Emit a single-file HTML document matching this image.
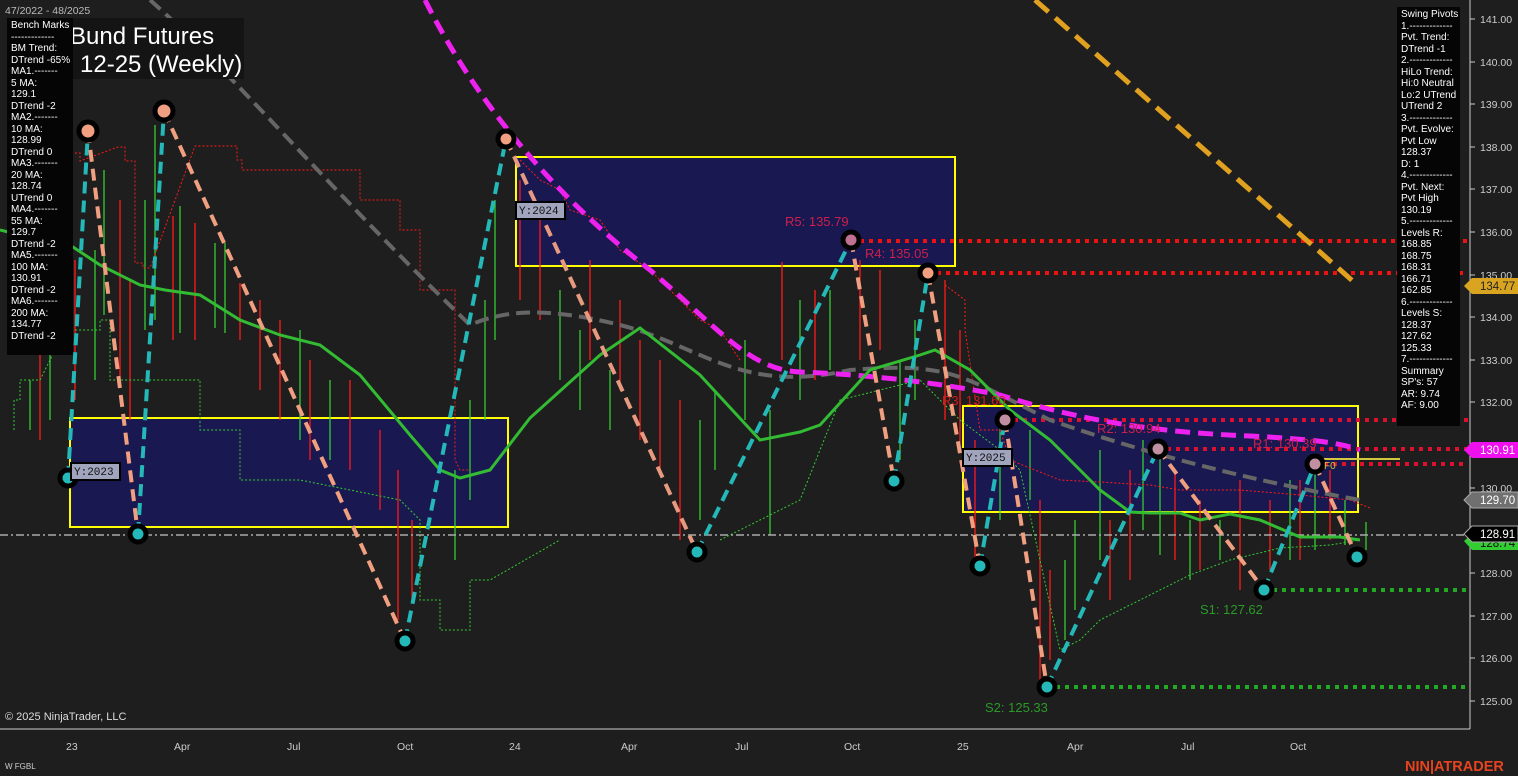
<!DOCTYPE html>
<html><head><meta charset="utf-8"><style>
html,body{margin:0;padding:0;background:#1e1e1e;width:1518px;height:776px;overflow:hidden;font-family:"Liberation Sans",sans-serif}
svg{position:absolute;left:0;top:0}
.panel{position:absolute;background:#050505;color:#fff;font-size:10px;line-height:11.5px;padding:2px 0 0 4px;box-sizing:border-box}
</style></head><body>
<svg width="1518" height="776" viewBox="0 0 1518 776" xmlns="http://www.w3.org/2000/svg">
<rect width="1518" height="776" fill="#1e1e1e"/>
<rect x="70" y="418" width="438" height="109" fill="#1a1850" stroke="#ffff00" stroke-width="2"/>
<rect x="516" y="157" width="439" height="109" fill="#1a1850" stroke="#ffff00" stroke-width="2"/>
<rect x="963" y="406" width="395" height="106" fill="#1a1850" stroke="#ffff00" stroke-width="2"/>
<g stroke-width="1.3">
<g stroke="#33cc33">
<line x1="30" y1="380" x2="30" y2="430"/><line x1="50" y1="330" x2="50" y2="420"/><line x1="95" y1="250" x2="95" y2="380"/><line x1="104" y1="170" x2="104" y2="315"/><line x1="145" y1="200" x2="145" y2="330"/><line x1="155" y1="125" x2="155" y2="320"/><line x1="180" y1="206" x2="180" y2="333"/><line x1="215" y1="243" x2="215" y2="328"/><line x1="225" y1="243" x2="225" y2="333"/><line x1="300" y1="330" x2="300" y2="440"/><line x1="330" y1="380" x2="330" y2="460"/><line x1="455" y1="470" x2="455" y2="560"/><line x1="470" y1="400" x2="470" y2="500"/><line x1="485" y1="300" x2="485" y2="420"/><line x1="495" y1="200" x2="495" y2="340"/><line x1="560" y1="290" x2="560" y2="380"/><line x1="580" y1="330" x2="580" y2="410"/><line x1="610" y1="370" x2="610" y2="430"/><line x1="700" y1="420" x2="700" y2="520"/><line x1="715" y1="390" x2="715" y2="470"/><line x1="745" y1="340" x2="745" y2="420"/><line x1="770" y1="410" x2="770" y2="535"/><line x1="800" y1="300" x2="800" y2="400"/><line x1="830" y1="290" x2="830" y2="370"/><line x1="900" y1="360" x2="900" y2="460"/><line x1="915" y1="320" x2="915" y2="400"/><line x1="1000" y1="420" x2="1000" y2="520"/><line x1="1030" y1="430" x2="1030" y2="500"/><line x1="1065" y1="560" x2="1065" y2="640"/><line x1="1075" y1="520" x2="1075" y2="610"/><line x1="1100" y1="450" x2="1100" y2="560"/><line x1="1143" y1="440" x2="1143" y2="530"/><line x1="1160" y1="450" x2="1160" y2="555"/><line x1="1190" y1="520" x2="1190" y2="580"/><line x1="1220" y1="520" x2="1220" y2="560"/><line x1="1290" y1="480" x2="1290" y2="560"/><line x1="1315" y1="470" x2="1315" y2="550"/><line x1="1345" y1="500" x2="1345" y2="545"/><line x1="1366" y1="522" x2="1366" y2="550"/>
</g>
<g stroke="#ff1a1a">
<line x1="40" y1="350" x2="40" y2="440"/><line x1="75" y1="260" x2="75" y2="400"/><line x1="120" y1="200" x2="120" y2="380"/><line x1="130" y1="280" x2="130" y2="420"/><line x1="173" y1="216" x2="173" y2="340"/><line x1="195" y1="223" x2="195" y2="340"/><line x1="240" y1="283" x2="240" y2="340"/><line x1="260" y1="300" x2="260" y2="390"/><line x1="280" y1="320" x2="280" y2="420"/><line x1="310" y1="360" x2="310" y2="460"/><line x1="350" y1="380" x2="350" y2="470"/><line x1="380" y1="430" x2="380" y2="510"/><line x1="398" y1="470" x2="398" y2="620"/><line x1="412" y1="520" x2="412" y2="600"/><line x1="520" y1="180" x2="520" y2="300"/><line x1="540" y1="220" x2="540" y2="320"/><line x1="590" y1="260" x2="590" y2="360"/><line x1="620" y1="300" x2="620" y2="390"/><line x1="640" y1="340" x2="640" y2="440"/><line x1="660" y1="360" x2="660" y2="470"/><line x1="680" y1="400" x2="680" y2="540"/><line x1="782" y1="262" x2="782" y2="360"/><line x1="815" y1="290" x2="815" y2="380"/><line x1="860" y1="260" x2="860" y2="360"/><line x1="880" y1="270" x2="880" y2="350"/><line x1="945" y1="280" x2="945" y2="420"/><line x1="960" y1="330" x2="960" y2="450"/><line x1="975" y1="440" x2="975" y2="560"/><line x1="1040" y1="500" x2="1040" y2="680"/><line x1="1050" y1="570" x2="1050" y2="660"/><line x1="1110" y1="520" x2="1110" y2="600"/><line x1="1130" y1="470" x2="1130" y2="580"/><line x1="1175" y1="470" x2="1175" y2="560"/><line x1="1200" y1="500" x2="1200" y2="570"/><line x1="1240" y1="480" x2="1240" y2="590"/><line x1="1270" y1="500" x2="1270" y2="570"/><line x1="1300" y1="480" x2="1300" y2="560"/><line x1="1330" y1="470" x2="1330" y2="540"/>
</g>
</g>
<polyline fill="none" stroke="#ff1a1a" stroke-width="1" stroke-dasharray="2,2" points="75,153 80,153 80,161 118,147 125,147 125,161 135,161 135,263 143,263 143,268 150,268 195,146 237,146 237,160 242,160 242,170 360,170 360,200 400,200 400,230 420,230 420,290 455,290 455,460 460,470 470,470"/>
<polyline fill="none" stroke="#ff1a1a" stroke-width="1" stroke-dasharray="2,2" points="520,160 540,180 560,190 570,210 600,220 620,250 650,270 680,300 700,320 720,330 740,360"/>
<polyline fill="none" stroke="#ff1a1a" stroke-width="1" stroke-dasharray="2,2" points="945,285 965,300 965,330 980,430 1000,430 1010,460 1060,480 1100,482 1150,485 1180,490 1240,490 1300,495 1350,500 1370,508"/>
<polyline fill="none" stroke="#33cc33" stroke-width="1" stroke-dasharray="2,2" points="14,430 14,400 20,400 20,380 40,380 50,360 60,340 70,330 100,330 100,320 110,320 110,380 200,380 200,430 240,430 240,480 300,480 400,500 420,520 420,600 440,600 440,630 470,630 470,580 490,580 560,540"/>
<polyline fill="none" stroke="#33cc33" stroke-width="1" stroke-dasharray="2,2" points="720,540 760,520 800,500 840,400 880,390 920,380 960,420 1000,450 1020,470 1040,560 1060,650 1080,640 1100,620 1140,600 1190,575 1230,560 1280,548 1330,545 1360,540"/>
<line x1="0" y1="535" x2="1470" y2="535" stroke="#aaa" stroke-width="1.5" stroke-dasharray="8,3,2,3"/>
<g stroke-width="4" stroke-dasharray="4,5" fill="none">
<line x1="851" y1="241" x2="1468" y2="241" stroke="#ee1111"/>
<line x1="928" y1="273" x2="1468" y2="273" stroke="#ee1111"/>
<line x1="1005" y1="420" x2="1468" y2="420" stroke="#dd1030"/>
<line x1="1158" y1="449" x2="1468" y2="449" stroke="#dd1030"/>
<line x1="1315" y1="464" x2="1468" y2="464" stroke="#dd1030"/>
<line x1="1264" y1="590" x2="1468" y2="590" stroke="#22aa22"/>
<line x1="1047" y1="687" x2="1468" y2="687" stroke="#22aa22"/>
</g>
<line x1="1320" y1="459" x2="1400" y2="459" stroke="#d4c840" stroke-width="2"/>
<path d="M1035,0 L1355,283" stroke="#e0a020" stroke-width="5" stroke-dasharray="18,9" fill="none"/>
<path d="M150,0 C230,70 330,190 470,325 C500,312 540,305 620,325 C700,345 740,395 850,370 C950,362 960,375 1050,420 C1150,455 1250,480 1360,500" stroke="#666" stroke-width="4" stroke-dasharray="14,7" fill="none"/>
<path d="M425,0 C480,110 560,200 650,270 C720,330 750,370 800,372 C880,375 950,385 1000,395 C1080,420 1150,432 1250,436 C1330,440 1345,445 1360,450" stroke="#ee22ee" stroke-width="5" stroke-dasharray="15,8" fill="none"/>
<polyline fill="none" stroke="#33bb33" stroke-width="3" points="0,230 40,240 70,245 100,265 140,285 165,290 200,295 240,320 280,335 320,345 360,375 410,435 440,470 460,478 490,470 530,418 600,355 640,328 700,375 760,440 800,432 820,425 870,370 920,355 935,350 970,370 1010,410 1050,440 1100,490 1130,512 1150,513 1180,513 1200,520 1230,514 1260,520 1300,537 1340,537 1360,540"/>
<g stroke-width="4" stroke-dasharray="12,7" fill="none">
<line x1="68" y1="478" x2="88" y2="131" stroke="#25b8b8"/>
<line x1="88" y1="131" x2="138" y2="534" stroke="#f0a080"/>
<line x1="138" y1="534" x2="164" y2="111" stroke="#25b8b8"/>
<line x1="164" y1="111" x2="405" y2="641" stroke="#f0a080"/>
<line x1="405" y1="641" x2="506" y2="139" stroke="#25b8b8"/>
<line x1="506" y1="139" x2="697" y2="552" stroke="#e89a80"/>
<line x1="697" y1="552" x2="851" y2="240" stroke="#25b8b8"/>
<line x1="851" y1="240" x2="894" y2="481" stroke="#f0a080"/>
<line x1="894" y1="481" x2="928" y2="273" stroke="#25b8b8"/>
<line x1="928" y1="273" x2="980" y2="566" stroke="#f0a080"/>
<line x1="980" y1="566" x2="1005" y2="420" stroke="#25b8b8"/>
<line x1="1005" y1="420" x2="1047" y2="687" stroke="#f0a080"/>
<line x1="1047" y1="687" x2="1158" y2="449" stroke="#25b8b8"/>
<line x1="1158" y1="449" x2="1264" y2="590" stroke="#f0a080"/>
<line x1="1264" y1="590" x2="1315" y2="464" stroke="#25b8b8"/>
<line x1="1315" y1="464" x2="1357" y2="557" stroke="#f0a080"/>
</g>
<g stroke="#000" stroke-width="5">
<circle cx="68" cy="478" r="8" fill="#25b8b8"/><circle cx="88" cy="131" r="9" fill="#f0a080"/><circle cx="138" cy="534" r="8" fill="#25b8b8"/><circle cx="164" cy="111" r="9" fill="#f0a080"/><circle cx="405" cy="641" r="8" fill="#25b8b8"/><circle cx="506" cy="139" r="8" fill="#f0a080"/><circle cx="697" cy="552" r="8" fill="#25b8b8"/><circle cx="851" cy="240" r="8" fill="#c07090"/><circle cx="894" cy="481" r="8" fill="#25b8b8"/><circle cx="928" cy="273" r="8" fill="#f0a080"/><circle cx="980" cy="566" r="8" fill="#25b8b8"/><circle cx="1005" cy="420" r="8" fill="#c090a0"/><circle cx="1047" cy="687" r="8" fill="#25b8b8"/><circle cx="1158" cy="449" r="8" fill="#c090a0"/><circle cx="1264" cy="590" r="8" fill="#25b8b8"/><circle cx="1315" cy="464" r="8" fill="#c090a0"/><circle cx="1357" cy="557" r="8" fill="#25b8b8"/>
</g>
<g font-family="Liberation Sans,sans-serif" font-size="13">
<text x="785" y="226" fill="#cc1f4c">R5: 135.79</text>
<text x="865" y="258" fill="#cc1f4c">R4: 135.05</text>
<text x="942" y="405" fill="#cc1f1f">R3: 131.60</text>
<text x="1097" y="433" fill="#cc1f4c">R2: 130.94</text>
<text x="1253" y="448" fill="#cc1f4c">R1: 130.39</text>
<text x="1324" y="469" fill="#d4c840" font-size="10">F0</text>
<text x="1200" y="614" fill="#2a9a2a">S1: 127.62</text>
<text x="985" y="712" fill="#2a9a2a">S2: 125.33</text>
</g>
<g font-family="Liberation Mono,monospace" font-size="11">
<rect x="71" y="463" width="49" height="17" fill="#a0a4bc" stroke="#000" stroke-width="2"/><text x="74" y="475" fill="#111">Y:2023</text>
<rect x="516" y="202" width="49" height="17" fill="#a0a4bc" stroke="#000" stroke-width="2"/><text x="519" y="214" fill="#111">Y:2024</text>
<rect x="963" y="449" width="49" height="17" fill="#a0a4bc" stroke="#000" stroke-width="2"/><text x="966" y="461" fill="#111">Y:2025</text>
</g>
<line x1="1470" y1="0" x2="1470" y2="729" stroke="#ccc" stroke-width="1"/>
<line x1="0" y1="729" x2="1470" y2="729" stroke="#ccc" stroke-width="1"/>
<g font-family="Liberation Sans,sans-serif" font-size="10.5" fill="#ccc">
<g stroke="#ccc"><line x1="1470" y1="19" x2="1475" y2="19"/><line x1="1470" y1="62" x2="1475" y2="62"/><line x1="1470" y1="104" x2="1475" y2="104"/><line x1="1470" y1="147" x2="1475" y2="147"/><line x1="1470" y1="189" x2="1475" y2="189"/><line x1="1470" y1="232" x2="1475" y2="232"/><line x1="1470" y1="275" x2="1475" y2="275"/><line x1="1470" y1="317" x2="1475" y2="317"/><line x1="1470" y1="360" x2="1475" y2="360"/><line x1="1470" y1="402" x2="1475" y2="402"/><line x1="1470" y1="488" x2="1475" y2="488"/><line x1="1470" y1="573" x2="1475" y2="573"/><line x1="1470" y1="616" x2="1475" y2="616"/><line x1="1470" y1="658" x2="1475" y2="658"/><line x1="1470" y1="701" x2="1475" y2="701"/></g>
<text x="1480" y="23">141.00</text><text x="1480" y="66">140.00</text><text x="1480" y="108">139.00</text><text x="1480" y="151">138.00</text><text x="1480" y="193">137.00</text><text x="1480" y="236">136.00</text><text x="1480" y="279">135.00</text><text x="1480" y="321">134.00</text><text x="1480" y="364">133.00</text><text x="1480" y="406">132.00</text><text x="1480" y="492">130.00</text><text x="1480" y="577">128.00</text><text x="1480" y="620">127.00</text><text x="1480" y="662">126.00</text><text x="1480" y="705">125.00</text>
<text x="66" y="750">23</text><text x="174" y="750">Apr</text><text x="287" y="750">Jul</text><text x="397" y="750">Oct</text><text x="509" y="750">24</text><text x="621" y="750">Apr</text><text x="735" y="750">Jul</text><text x="844" y="750">Oct</text><text x="957" y="750">25</text><text x="1067" y="750">Apr</text><text x="1181" y="750">Jul</text><text x="1290" y="750">Oct</text>
</g>
<g font-family="Liberation Sans,sans-serif" font-size="11.5">
<polygon points="1464,286 1472,278 1518,278 1518,294 1472,294" fill="#d9a520"/><text x="1480" y="290" fill="#222">134.77</text>
<polygon points="1464,450 1472,442 1518,442 1518,458 1472,458" fill="#ee11ee"/><text x="1480" y="454" fill="#fff">130.91</text>
<polygon points="1464,541 1472,534 1518,534 1518,550 1472,550" fill="#33cc33"/><text x="1480" y="547" fill="#111">128.74</text>
<polygon points="1464,500 1472,492 1518,492 1518,508 1472,508" fill="#707070" stroke="#aaa"/><text x="1480" y="504" fill="#fff">129.70</text>
<polygon points="1464,534 1472,526 1518,526 1518,542 1472,542" fill="#000" stroke="#aaa"/><text x="1480" y="538" fill="#fff">128.91</text>
</g>
<text x="5" y="14" font-family="Liberation Sans,sans-serif" font-size="10.5" fill="#bbb">47/2022 - 48/2025</text>
<rect x="60" y="18" width="184" height="61" fill="#141414"/>
<text x="70" y="44" font-family="Liberation Sans,sans-serif" font-size="24" fill="#fff">Bund Futures</text>
<text x="80" y="72" font-family="Liberation Sans,sans-serif" font-size="24" fill="#fff">12-25 (Weekly)</text>
<text x="5" y="720" font-family="Liberation Sans,sans-serif" font-size="11" fill="#ddd">© 2025 NinjaTrader, LLC</text>
<text x="5" y="769" font-family="Liberation Sans,sans-serif" font-size="8" fill="#ccc">W FGBL</text>
<text x="1405" y="771" font-family="Liberation Sans,sans-serif" font-size="14.5" font-weight="bold" fill="#e8431e">NIN|ATRADER</text>
</svg>
<div class="panel" style="left:7px;top:18px;width:66px;height:337px;padding-left:4px">Bench Marks<br>-------------<br>BM Trend:<br>DTrend -65%<br>MA1.-------<br>5 MA:<br>129.1<br>DTrend -2<br>MA2.-------<br>10 MA:<br>128.99<br>DTrend 0<br>MA3.-------<br>20 MA:<br>128.74<br>UTrend 0<br>MA4.-------<br>55 MA:<br>129.7<br>DTrend -2<br>MA5.-------<br>100 MA:<br>130.91<br>DTrend -2<br>MA6.-------<br>200 MA:<br>134.77<br>DTrend -2</div>
<div class="panel" style="left:1397px;top:7px;width:63px;height:419px">Swing Pivots<br>1.-------------<br>Pvt. Trend:<br>DTrend -1<br>2.-------------<br>HiLo Trend:<br>Hi:0 Neutral<br>Lo:2 UTrend<br>UTrend 2<br>3.-------------<br>Pvt. Evolve:<br>Pvt Low<br>128.37<br>D: 1<br>4.-------------<br>Pvt. Next:<br>Pvt High<br>130.19<br>5.-------------<br>Levels R:<br>168.85<br>168.75<br>168.31<br>166.71<br>162.85<br>6.-------------<br>Levels S:<br>128.37<br>127.62<br>125.33<br>7.-------------<br>Summary<br>SP's: 57<br>AR: 9.74<br>AF: 9.00</div>
</body></html>
